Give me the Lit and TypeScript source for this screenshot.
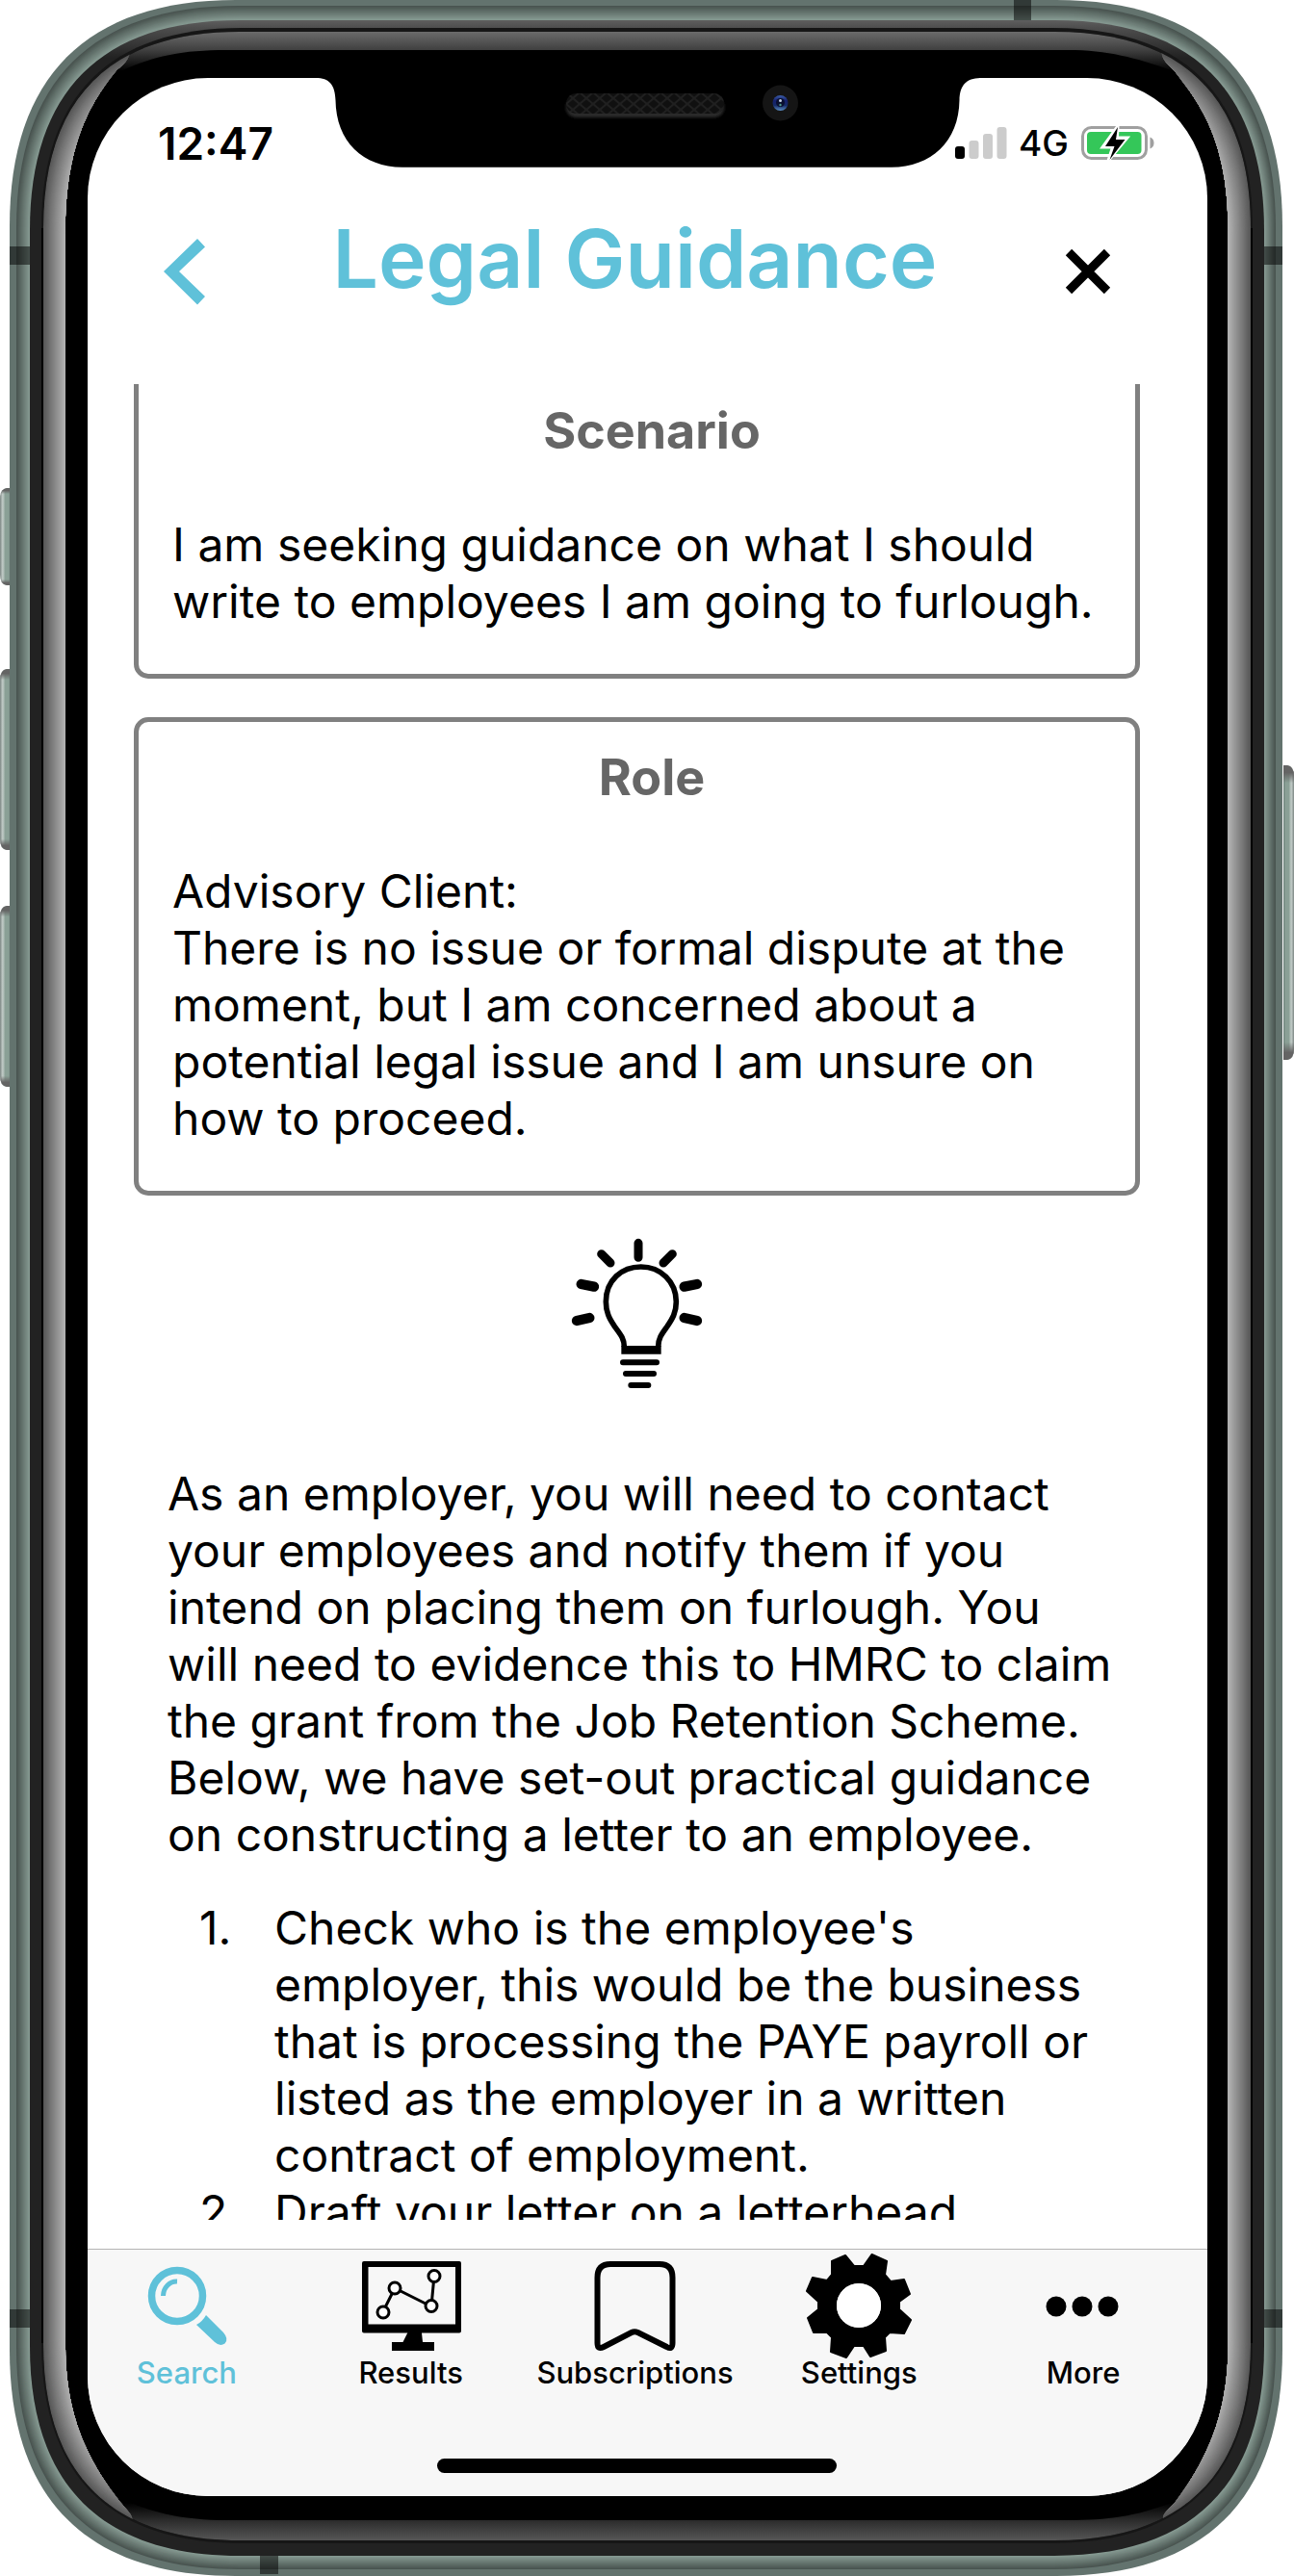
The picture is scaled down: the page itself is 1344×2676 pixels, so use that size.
import { LitElement, css, html, svg } from "lit";
import { customElement, property, state } from "lit/decorators.js";

type Box = [number, number, number, number];

/** Rounded outline with continuous corners: `len` is the corner extent, `k` the handle length. */
function squircle([x0, y0, x1, y1]: Box, len: number, k = 0.66): string {
  const h = len * (1 - k);
  return `M${x0} ${y0 + len}C${x0} ${y0 + h} ${x0 + h} ${y0} ${x0 + len} ${y0}H${x1 - len}C${x1 - h} ${y0} ${x1} ${y0 + h} ${x1} ${y0 + len}V${y1 - len}C${x1} ${y1 - h} ${x1 - h} ${y1} ${x1 - len} ${y1}H${x0 + len}C${x0 + h} ${y1} ${x0} ${y1 - h} ${x0} ${y1 - len}Z`;
}

function mix(a: number[], b: number[], t: number): string {
  return `rgb(${a.map((v, i) => Math.round(v + (b[i] - v) * t)).join(",")})`;
}

function rings(a: Box, b: Box, lenA: number, lenB: number, from: number[], to: number[], n: number) {
  return Array.from({ length: n }, (_, i) => {
    const t = i / n;
    const box = a.map((v, j) => v + (b[j] - v) * t) as Box;
    return svg`<path d=${squircle(box, lenA + (lenB - lenA) * t)} fill=${mix(from, to, i / (n - 1))}></path>`;
  });
}

@customElement("device-chassis")
class DeviceChassis extends LitElement {
  static styles = css`
    :host { display: block; }
    .body { display: block; width: 100%; height: 100%; }
  `;

  sideKey(x: number, y: number, h: number, flip: boolean) {
    const shape = flip
      ? `M${x} ${y}h4q7 1 7 11v${h - 22}q0 10 -7 11h-4z`
      : `M${x + 11} ${y}h-4q-7 1 -7 11v${h - 22}q0 10 7 11h4z`;
    return svg`<path d=${shape} fill=${flip ? "url(#keyR)" : "url(#keyL)"}></path>
      <path d=${shape} fill="url(#keyEnds)"></path>`;
  }

  render() {
    const glass = squircle([45, 33, 1299, 2639], 204);
    return html`<svg class="body" viewBox="0 0 1344 2676" preserveAspectRatio="none" aria-hidden="true">
      <defs>
        <linearGradient id="keyL"><stop offset="0" stop-color="#7c8683"/><stop offset=".25" stop-color="#c3cdc9"/><stop offset=".5" stop-color="#8aa096"/><stop offset=".8" stop-color="#8aa096"/><stop offset="1" stop-color="#6d817a"/></linearGradient>
        <linearGradient id="keyR"><stop offset="0" stop-color="#6d817a"/><stop offset=".2" stop-color="#8aa096"/><stop offset=".5" stop-color="#8aa096"/><stop offset=".75" stop-color="#c3cdc9"/><stop offset="1" stop-color="#7c8683"/></linearGradient>
        <linearGradient id="keyEnds" x1="0" y1="0" x2="0" y2="1"><stop offset="0" stop-color="#646464"/><stop offset=".025" stop-color="#646464"/><stop offset=".06" stop-color="#646464" stop-opacity="0"/><stop offset=".94" stop-color="#646464" stop-opacity="0"/><stop offset=".975" stop-color="#646464"/><stop offset="1" stop-color="#646464"/></linearGradient>
        <linearGradient id="rim" gradientUnits="userSpaceOnUse" x1="0" y1="21" x2="0" y2="60"><stop offset="0" stop-color="#5e5e5e"/><stop offset=".2" stop-color="#4e4e4e"/><stop offset="1" stop-color="#222"/></linearGradient>
        <linearGradient id="glassTop" gradientUnits="userSpaceOnUse" x1="0" y1="33" x2="0" y2="74"><stop offset="0" stop-color="#6b6b6b"/><stop offset=".46" stop-color="#404040"/><stop offset="1" stop-color="#000"/></linearGradient>
        <linearGradient id="glassBottom" gradientUnits="userSpaceOnUse" x1="0" y1="2600" x2="0" y2="2639"><stop offset="0" stop-color="#000"/><stop offset=".46" stop-color="#2b2b2b"/><stop offset="1" stop-color="#565656"/></linearGradient>
        <clipPath id="glass"><path d=${glass}></path></clipPath>
        <clipPath id="sides">
          <path d="M0 30L130 30L136 52C134 62 128 68 122 72C94 106 68 150 68 240V2438C68 2512 94 2560 124 2598C132 2608 138 2612 138 2619L130 2650H0Z"/>
          <path d="M1344 30L1214 30L1206 52C1206 62 1214 68 1220 74C1250 112 1275.5 150 1275.5 240V2438C1275.5 2512 1250 2560 1220 2600C1212 2608 1207 2612 1208 2617L1214 2650H1344Z"/>
        </clipPath>
      </defs>
      ${this.sideKey(0, 507, 101, false)}${this.sideKey(0, 695, 188, false)}${this.sideKey(0, 941, 188, false)}${this.sideKey(1333, 795, 306, true)}
      <path d=${squircle([10, 0, 1332, 2676], 235)} fill="#63736e"></path>
      ${rings([17, 6, 1325, 2669], [31, 21, 1313, 2655], 231, 218, [73, 84, 80], [133, 153, 145], 14)}
      <g fill="#000" fill-opacity=".5">
        <rect x="10" y="256" width="21" height="19"/><rect x="10" y="2399" width="21" height="19"/>
        <rect x="1311" y="256" width="21" height="19"/><rect x="1311" y="2399" width="21" height="19"/>
        <rect x="1053" y="0" width="18" height="21"/><rect x="270" y="2653" width="19" height="21"/>
      </g>
      <path d=${squircle([31, 21, 1313, 2655], 218)} fill="url(#rim)"></path>
      <path d=${squircle([43, 29, 1301, 2642], 208)} fill="#161616"></path>
      <path d="M43 237V2434h3V237ZM1298 237V2434h3V237Z" fill="#000"></path>
      <path d=${glass} fill="#000"></path>
      <g clip-path="url(#glass)">
        <rect x="45" y="33" width="1254" height="60" fill="url(#glassTop)"/>
        <rect x="45" y="2580" width="1254" height="60" fill="url(#glassBottom)"/>
        <path d="M45 90L128 73C160 58 190 52 235 52H1109C1150 52 1180 60 1216 73L1299 90V2580L1216 2600C1180 2614 1150 2618 1109 2618H235C190 2618 160 2610 136 2600L45 2580Z" fill="#000"/>
      </g>
      <g clip-path="url(#sides)">${rings([45, 33, 1299, 2639], [68, 56, 1275.5, 2616], 204, 190, [88, 88, 88], [178, 178, 178], 23)}</g>
    </svg>`;
  }
}

@customElement("device-notch")
class DeviceNotch extends LitElement {
  static styles = css`
    :host { display: block; }
    .notch { display: block; width: 100%; height: 100%; }
  `;
  render() {
    return html`<svg class="notch" viewBox="328 80 691 94" aria-hidden="true">
      <defs>
        <pattern id="mesh" width="14" height="12" patternUnits="userSpaceOnUse"><path d="M0 0L14 12M14 0L0 12" stroke="#202020" stroke-width="2"/></pattern>
        <linearGradient id="lens" x1="0" y1="0" x2="0" y2="1"><stop offset="0" stop-color="#3c5ea8"/><stop offset=".35" stop-color="#15206e"/><stop offset=".65" stop-color="#152a66"/><stop offset="1" stop-color="#5c8fc4"/></linearGradient>
        <filter id="soft"><feGaussianBlur stdDeviation="1.5"/></filter>
      </defs>
      <path d="M328 80V81C342 81 348 88 348.500 104C349 147 377 173.700 418 173.700H926C967 173.700 996 147 996.500 104C997 88 1004 81 1019 81V80Z"/>
      <rect x="588" y="101" width="164" height="21" rx="10" fill="#2c2c2c" filter="url(#soft)"/>
      <rect x="588" y="97" width="164" height="21" rx="10" fill="#101010"/>
      <rect x="588" y="97" width="164" height="21" rx="10" fill="url(#mesh)"/>
      <circle cx="810.500" cy="107" r="18.500" fill="#151515"/>
      <circle cx="810.500" cy="107" r="8" fill="url(#lens)"/>
      <circle cx="810.500" cy="106.500" r="4.500" fill="#0a1030"/>
      <circle cx="810.500" cy="104.500" r="1.500" fill="#c8d4e8"/><circle cx="810.500" cy="109" r="1.200" fill="#4f9a8c"/>
    </svg>`;
  }
}

const icons = {
  search: svg`<circle cx="45" cy="44" r="26.500" fill="none" stroke="currentColor" stroke-width="7.500"/>
    <path d="M30.500 44A14 15 0 0 1 45 29" fill="none" stroke="currentColor" stroke-width="5"/>
    <path d="M75 64L93 82Q99 89 94.500 93.500Q89.500 97 84 92L65 74Q71 71 75 64Z" fill="currentColor"/>`,
  results: svg`<path fill-rule="evenodd" d="M6 8H105Q107 8 107 10V80.500Q107 82.500 105 82.500H66L67 92H79V101H35V92H47.500L52 82.500H6Q4 82.500 4 80.500V10Q4 8 6 8ZM10.500 14V73.500H101V14Z"/>
    <path d="M63 82L67 93H46L51.500 82Z"/>
    <g fill="#fff" stroke="#000" stroke-width="3"><path d="M26 60L38 36L76 55L79 23" fill="none"/>
    <circle cx="26" cy="61" r="6"/><circle cx="38" cy="36" r="6"/><circle cx="76" cy="54.500" r="6"/><circle cx="79" cy="23.500" r="6"/></g>`,
  bookmark: svg`<path d="M16.500 93V25Q16.500 11 30 11H81Q94.500 11 94.500 25V93Q94.500 100.500 88.500 97L58.500 82Q55 80.500 52 82L23 97Q16.500 100.500 16.500 93Z" fill="none" stroke="#000" stroke-width="6"/>`,
  settings: svg`<path fill-rule="evenodd" stroke="#000" stroke-width="2" stroke-linejoin="round" d="M27 8L41 2L50 13H60L68.500 1L84 8L82 22L88 29L102 27L108 42L97 50V58L109 69L102 83L87 82L82 87L83 101L67 107L60 96H50L42 108L26 102L27 87L22 82L8 82L2 67L13 58V50L1 39L7 25L22 28L27 22ZM55 30A24 24 0 1 0 55 78A24 24 0 1 0 55 30Z"/>
    <circle cx="55" cy="54" r="23" fill="#fff"/>`,
  more: svg`<circle cx="27" cy="55" r="10.500"/><circle cx="54" cy="55" r="10.500"/><circle cx="81" cy="55" r="10.500"/>`,
};
type IconName = keyof typeof icons;

const tabs: { id: IconName; label: string }[] = [
  { id: "search", label: "Search" },
  { id: "results", label: "Results" },
  { id: "bookmark", label: "Subscriptions" },
  { id: "settings", label: "Settings" },
  { id: "more", label: "More" },
];

@customElement("tab-bar")
class TabBar extends LitElement {
  @state() active: IconName = "search";
  static styles = css`
    :host { display: block; }
    .tabs { display: grid; grid-template-columns: repeat(5, minmax(0, 1fr)); column-gap: 27px; padding: 4px 26px 0 0; }
    .tab { display: flex; flex-direction: column; align-items: center; margin: 0; padding: 0; border: 0; background: none; color: #000; font: 500 31px/28px Inter, "Liberation Sans", sans-serif; white-space: nowrap; cursor: pointer; }
    .tab[aria-current="page"] { color: #5fc1d9; }
    .icon { width: 110px; height: 110px; }
  `;
  render() {
    return html`<nav class="tabs" aria-label="Main">
      ${tabs.map((t) => html`<button class="tab" aria-current=${t.id === this.active ? "page" : "false"} @click=${() => (this.active = t.id)}>
        <svg class="icon" viewBox="0 0 110 110" aria-hidden="true">${icons[t.id]}</svg><span>${t.label}</span>
      </button>`)}
    </nav>`;
  }
}

@customElement("info-card")
class InfoCard extends LitElement {
  @property() heading = "";
  static styles = css`
    :host { display: block; box-sizing: border-box; border: 5px solid #808080; border-radius: 15px; padding: 28px 4px 46px 35px; }
    .heading { margin: 0 0 59px; color: #666; font-size: 52px; font-weight: 700; line-height: 59px; text-align: center; }
  `;
  render() {
    return html`<h2 class="heading">${this.heading}</h2><slot></slot>`;
  }
}

const steps = [
  "Check who is the employee's employer, this would be the business that is processing the PAYE payroll or listed as the employer in a written contract of employment.",
  "Draft your letter on a letterhead",
];

@customElement("app-root")
class AppRoot extends LitElement {
  static styles = css`
    :host { display: block; background: #fff; color: #000; font-family: Inter, "Liberation Sans", sans-serif; }
    .phone { position: relative; box-sizing: border-box; height: 100vh; padding: 81px 90px 83px 91px; }
    .chassis { position: absolute; inset: 0; }
    .notch { position: absolute; top: 80px; left: 50%; width: 691px; height: 94px; margin-left: -344px; }
    .screen { position: relative; display: flex; flex-direction: column; height: 100%; overflow: hidden; border-radius: 125px; background: #fff; }
    .status { display: flex; justify-content: space-between; align-items: center; height: 48px; padding: 44px 54px 0 73px; }
    .time { font-size: 46px; font-weight: 600; line-height: 48px; }
    .indicators { display: flex; align-items: center; gap: 12px; font-size: 37px; font-weight: 500; line-height: 48px; }
    .signal { width: 54px; height: 36px; }
    .battery { width: 78px; height: 38px; }
    .header { display: flex; justify-content: space-between; align-items: center; height: 100px; margin: 49px 98px 77px 77px; }
    .title { margin: 0 0 6px; color: #5fc1d9; font-size: 84px; font-weight: 600; line-height: 100px; white-space: nowrap; }
    .action { display: flex; margin: 20px 0 0; padding: 0; border: 0; background: none; cursor: pointer; }
    .chevron { width: 47px; height: 70px; }
    .cross { width: 52px; height: 52px; }
    .scroller { flex: 1; min-height: 0; overflow: hidden; margin: 0 70px 30px 48px; font-size: 48px; line-height: 59px; }
    .content { display: flex; flex-direction: column; gap: 40px; margin-top: -14px; }
    .text { margin: 0; }
    .bulb { align-self: center; width: 220px; height: 220px; margin: -31px 0 11px 16px; }
    .answer { padding: 0 25px 0 35px; }
    .steps { list-style: none; margin: 38px 0 0; padding: 0 0 0 33px; }
    .step { display: grid; grid-template-columns: 78px 1fr; }
    .dock { flex: none; display: flex; flex-direction: column; height: 256px; border-top: 1px solid #b4b4b4; background: #f7f7f7; }
    .homerow { display: flex; flex: 1; justify-content: center; align-items: flex-end; padding: 0 23px 24px 0; }
    .home { width: 415px; height: 15px; border-radius: 8px; background: #000; }
  `;

  render() {
    return html`<div class="phone">
      <device-chassis class="chassis"></device-chassis>
      <main class="screen">
        <div class="status">
          <span class="time">12:47</span>
          <div class="indicators">
            <svg class="signal" viewBox="0 0 54 36" role="img" aria-label="Signal: one bar"><rect x="0" y="21" width="10" height="13" rx="3"/><g fill="#ccc"><rect x="14.500" y="15" width="10" height="19" rx="3"/><rect x="29" y="8" width="10" height="26" rx="3"/><rect x="43.500" y="1" width="10" height="33" rx="3"/></g></svg>
            <span>4G</span>
            <svg class="battery" viewBox="1121 130 78 38" role="img" aria-label="Battery charging">
              <rect x="1123.500" y="132.500" width="66" height="32" rx="9" fill="none" stroke="#a0a0a0" stroke-width="3"/>
              <path d="M1193.500 142.500Q1197.500 144 1197.500 148.500Q1197.500 153 1193.500 154.500Z" fill="#a0a0a0"/>
              <rect x="1128" y="137" width="56.500" height="23" rx="4" fill="#34c759"/>
              <path d="M1160 131L1144 153H1154.500L1150 167L1170 143H1159.500Z" fill="#fff" stroke="#fff" stroke-width="3"/>
              <path d="M1160 132L1147 152H1156.500L1151.500 166L1167.500 145H1158Z"/>
            </svg>
          </div>
        </div>
        <header class="header">
          <button class="action" aria-label="Back"><svg class="chevron" viewBox="0 0 47 70"><path d="M37 1L45 9.500L18 35L45 61L37 69.500L2 35Z" fill="#5fc1d9"/></svg></button>
          <h1 class="title">Legal Guidance</h1>
          <button class="action" aria-label="Close"><svg class="cross" viewBox="0 0 52 52"><path d="M6 6L46 46M46 6L6 46" stroke="#000" stroke-width="9"/></svg></button>
        </header>
        <section class="scroller">
          <div class="content">
            <info-card heading="Scenario"><p class="text">I am seeking guidance on what I should write to employees I am going to furlough.</p></info-card>
            <info-card heading="Role"><p class="text">Advisory Client:<br>There is no issue or formal dispute at the moment, but I am concerned about a potential legal issue and I am unsure on how to proceed.</p></info-card>
            <svg class="bulb" viewBox="0 0 660 660" aria-hidden="true" stroke="#000" fill="none" stroke-linecap="round">
              <path d="M265 444C265 418 252 404 236 382C218 356 208 336 208 304C208 236 258 195 317 195C378 195 427 240 427 304C427 336 416 356 398 382C382 404 371 418 371 444" stroke-width="17" stroke-linecap="butt"/>
              <path d="M256 441H380V467H256Z" fill="#000" stroke="none"/>
              <path d="M261 493H366M270 528H357M286 564H340" stroke-width="18"/>
              <path d="M309 121V166M194 155L222 183M415 155L387 183" stroke-width="27"/>
              <path d="M131 249L171 257M117 363L157 354M492 249L452 257M492 363L452 354" stroke-width="31"/>
            </svg>
            <div class="answer">
              <p class="text">As an employer, you will need to contact your employees and notify them if you intend on placing them on furlough. You will need to evidence this to HMRC to claim the grant from the Job Retention Scheme. Below, we have set-out practical guidance on constructing a letter to an employee.</p>
              <ol class="steps">
                ${steps.map((s, i) => html`<li class="step"><span>${i + 1}.</span><span>${s}</span></li>`)}
              </ol>
            </div>
          </div>
        </section>
        <footer class="dock">
          <tab-bar></tab-bar>
          <div class="homerow"><div class="home"></div></div>
        </footer>
      </main>
      <device-notch class="notch"></device-notch>
    </div>`;
  }
}
